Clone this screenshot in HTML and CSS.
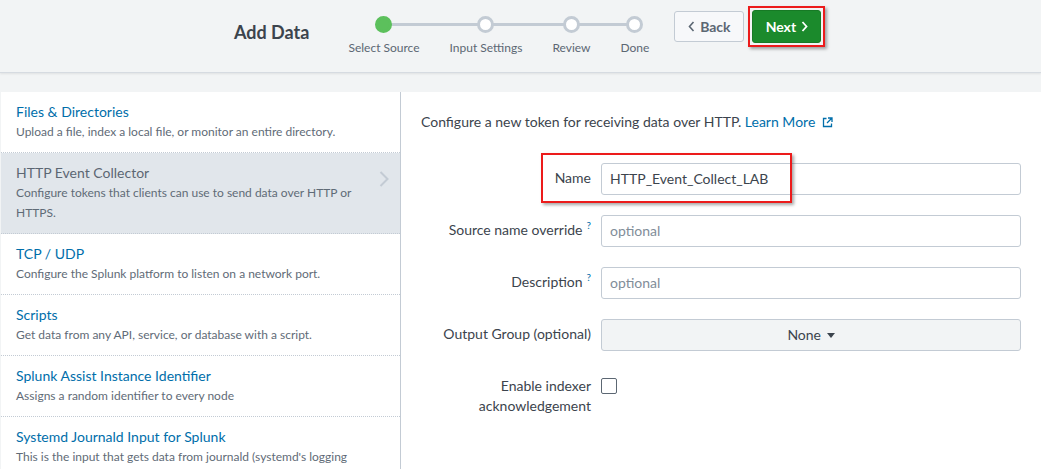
FILE: index.html
```html
<!DOCTYPE html>
<html lang="en">
<head>
<meta charset="utf-8">
<title>Add Data</title>
<link rel="stylesheet" href="styles.css">
</head>
<body>
<header class="topbar">
  <h1 class="title">Add Data</h1>
  <ol class="steps">
    <li class="step is-active"><span class="dot"></span><span class="step-label">Select Source</span></li>
    <li class="step"><span class="dot"></span><span class="step-label">Input Settings</span></li>
    <li class="step"><span class="dot"></span><span class="step-label">Review</span></li>
    <li class="step"><span class="dot"></span><span class="step-label">Done</span></li>
  </ol>
  <div class="actions">
    <button class="btn btn-back" type="button"><svg class="chev" width="7" height="11" viewBox="0 0 7 11"><path d="M5.5 1 1.5 5.5 5.5 10" fill="none" stroke="currentColor" stroke-width="1.6"/></svg>Back</button>
    <span class="highlight-box"><button class="btn btn-next" type="button">Next<svg class="chev" width="7" height="11" viewBox="0 0 7 11"><path d="M1.5 1 5.5 5.5 1.5 10" fill="none" stroke="currentColor" stroke-width="1.8"/></svg></button></span>
  </div>
</header>

<main class="panel">
  <ul class="sources">
    <li class="source">
      <div class="source-title">Files &amp; Directories</div>
      <div class="source-desc">Upload a file, index a local file, or monitor an entire directory.</div>
    </li>
    <li class="source is-selected">
      <div class="source-title">HTTP Event Collector</div>
      <div class="source-desc">Configure tokens that clients can use to send data over HTTP or HTTPS.</div>
      <svg class="source-chev" width="10" height="16" viewBox="0 0 10 16"><path d="M1.5 1 8.5 8 1.5 15" fill="none" stroke="currentColor" stroke-width="2"/></svg>
    </li>
    <li class="source">
      <div class="source-title">TCP / UDP</div>
      <div class="source-desc">Configure the Splunk platform to listen on a network port.</div>
    </li>
    <li class="source">
      <div class="source-title">Scripts</div>
      <div class="source-desc">Get data from any API, service, or database with a script.</div>
    </li>
    <li class="source">
      <div class="source-title">Splunk Assist Instance Identifier</div>
      <div class="source-desc">Assigns a random identifier to every node</div>
    </li>
    <li class="source">
      <div class="source-title">Systemd Journald Input for Splunk</div>
      <div class="source-desc">This is the input that gets data from journald (systemd's logging</div>
    </li>
  </ul>

  <section class="content">
    <p class="intro">Configure a new token for receiving data over HTTP. <a class="link" href="#">Learn More <svg class="ext" width="11" height="11" viewBox="0 0 11 11"><path d="M4.5 1.5H1.5v8h8v-3" fill="none" stroke="currentColor" stroke-width="1.3"/><path d="M6 1h4v4M10 1 5 6" fill="none" stroke="currentColor" stroke-width="1.3"/></svg></a></p>

    <div class="form">
      <div class="row">
        <label class="label">Name</label>
        <input class="input" type="text" value="HTTP_Event_Collect_LAB">
        <span class="name-highlight"></span>
      </div>
      <div class="row">
        <label class="label">Source name override<sup class="help">?</sup></label>
        <input class="input" type="text" placeholder="optional">
      </div>
      <div class="row">
        <label class="label">Description<sup class="help">?</sup></label>
        <input class="input" type="text" placeholder="optional">
      </div>
      <div class="row">
        <label class="label">Output Group (optional)</label>
        <button class="select" type="button">None <span class="caret"></span></button>
      </div>
      <div class="row">
        <label class="label">Enable indexer acknowledgement</label>
        <span class="checkbox"></span>
      </div>
    </div>
  </section>
</main>
</body>
</html>
```

FILE: styles.css
```css
* { box-sizing: border-box; }

html, body {
  margin: 0;
  height: 100%;
}

body {
  background: #f2f4f5;
  font-family: Lato, "Open Sans", sans-serif;
  color: #3c444d;
  overflow: hidden;
}

/* ---------- top bar ---------- */
.topbar {
  display: flex;
  align-items: flex-start;
  height: 73px;
  padding-left: 234px;
  background: #f2f4f5;
  border-bottom: 1px solid #d6dbe1;
  box-shadow: 0 1px 2px rgba(0, 0, 0, 0.08);
}

.title {
  margin: 21px 0 0;
  font-size: 18px;
  line-height: 22px;
  font-weight: 700;
  color: #3c444d;
}

.steps {
  display: flex;
  margin: 0 0 0 24px;
  padding: 0;
  list-style: none;
}

.step {
  position: relative;
  display: flex;
  flex-direction: column;
  align-items: center;
  padding: 0 15px;
}

.step::before,
.step::after {
  content: "";
  position: absolute;
  top: 23px;
  height: 3px;
  background: #c3cbd4;
}
.step::before { left: 0; right: 50%; }
.step::after { left: 50%; right: 0; }
.step:first-child::before,
.step:last-child::after { display: none; }

.dot {
  position: relative;
  z-index: 1;
  width: 17px;
  height: 17px;
  margin-top: 16px;
  border-radius: 50%;
  border: 3px solid #c3cbd4;
  background: #fff;
}

.step.is-active .dot {
  border-color: #5cc05c;
  background: #5cc05c;
}

.step-label {
  margin-top: 7px;
  font-size: 12px;
  line-height: 16px;
  color: #5c6773;
  white-space: nowrap;
}

.actions {
  display: flex;
  align-items: center;
  gap: 4px;
  margin-left: 10px;
  padding-top: 6px;
}

.btn {
  display: inline-flex;
  align-items: center;
  justify-content: center;
  gap: 5px;
  font-family: inherit;
  font-size: 14px;
  font-weight: 700;
  border-radius: 3px;
  cursor: pointer;
}

.btn-back {
  width: 70px;
  height: 31px;
  border: 1px solid #c3cbd4;
  background: #f7f8fa;
  color: #5c6773;
}

.highlight-box {
  display: inline-block;
  padding: 2px;
  border: 2px solid #ec1b1b;
  box-shadow: 2px 2px 3px rgba(0, 0, 0, 0.35);
}

.btn-next {
  display: flex;
  width: 69px;
  height: 33px;
  border: 1px solid #177a25;
  background: #1b8a2c;
  color: #fff;
}

/* ---------- panel ---------- */
.panel {
  display: flex;
  height: calc(100% - 92px);
  margin: 19px 0 0 1px;
  background: #fff;
  overflow: hidden;
}

.sources {
  width: 400px;
  flex: none;
  margin: 0;
  padding: 0;
  list-style: none;
  border-right: 1px solid #c3cbd4;
}

.source {
  position: relative;
  padding: 10px 15px;
  border-bottom: 1px dotted #c3cbd4;
}

.source.is-selected {
  background: #e1e6eb;
  padding-right: 40px;
}

.source-title {
  font-size: 14px;
  line-height: 20px;
  color: #006eaa;
}

.source.is-selected .source-title {
  color: #5c6773;
}

.source-desc {
  font-size: 12px;
  line-height: 20px;
  color: #5f6b77;
}

.source-chev {
  position: absolute;
  top: 18px;
  right: 11px;
  color: #c3cbd4;
}

/* ---------- content ---------- */
.content {
  flex: 1;
  padding: 20px 20px 0;
}

.intro {
  margin: 0 0 31px;
  font-size: 14px;
  line-height: 20px;
  color: #3c444d;
}

.link {
  color: #006eaa;
  text-decoration: none;
}

.ext {
  margin-left: 3px;
  vertical-align: -1px;
}

.row {
  position: relative;
  display: grid;
  grid-template-columns: 170px 420px;
  column-gap: 10px;
  margin-bottom: 20px;
}

.label {
  padding-top: 5px;
  font-size: 14px;
  line-height: 20px;
  text-align: right;
  color: #3c444d;
}

.help {
  margin-left: 4px;
  font-size: 10px;
  line-height: 0;
  color: #006eaa;
}

.input {
  height: 32px;
  padding: 0 8px 1px;
  border: 1px solid #c3cbd4;
  border-radius: 3px;
  font-family: inherit;
  font-size: 14px;
  color: #3c444d;
  background: #fff;
}

.input::placeholder {
  color: #818d99;
}

.name-highlight {
  position: absolute;
  left: 120px;
  top: -10px;
  width: 251px;
  height: 50px;
  border: 2px solid #ec1b1b;
  box-shadow: 2px 2px 3px rgba(0, 0, 0, 0.35);
  pointer-events: none;
}

.select {
  height: 32px;
  padding: 0 0 2px;
  border: 1px solid #c3cbd4;
  border-radius: 3px;
  background: #f2f4f5;
  font-family: inherit;
  font-size: 14px;
  color: #3c444d;
  text-align: center;
}

.caret {
  display: inline-block;
  width: 0;
  height: 0;
  margin-left: 2px;
  vertical-align: 2px;
  border-left: 4px solid transparent;
  border-right: 4px solid transparent;
  border-top: 5px solid #3c444d;
}

.checkbox {
  width: 16px;
  height: 16px;
  margin-top: 7px;
  border: 1px solid #5c6773;
  border-radius: 2px;
  background: #fff;
}
```
